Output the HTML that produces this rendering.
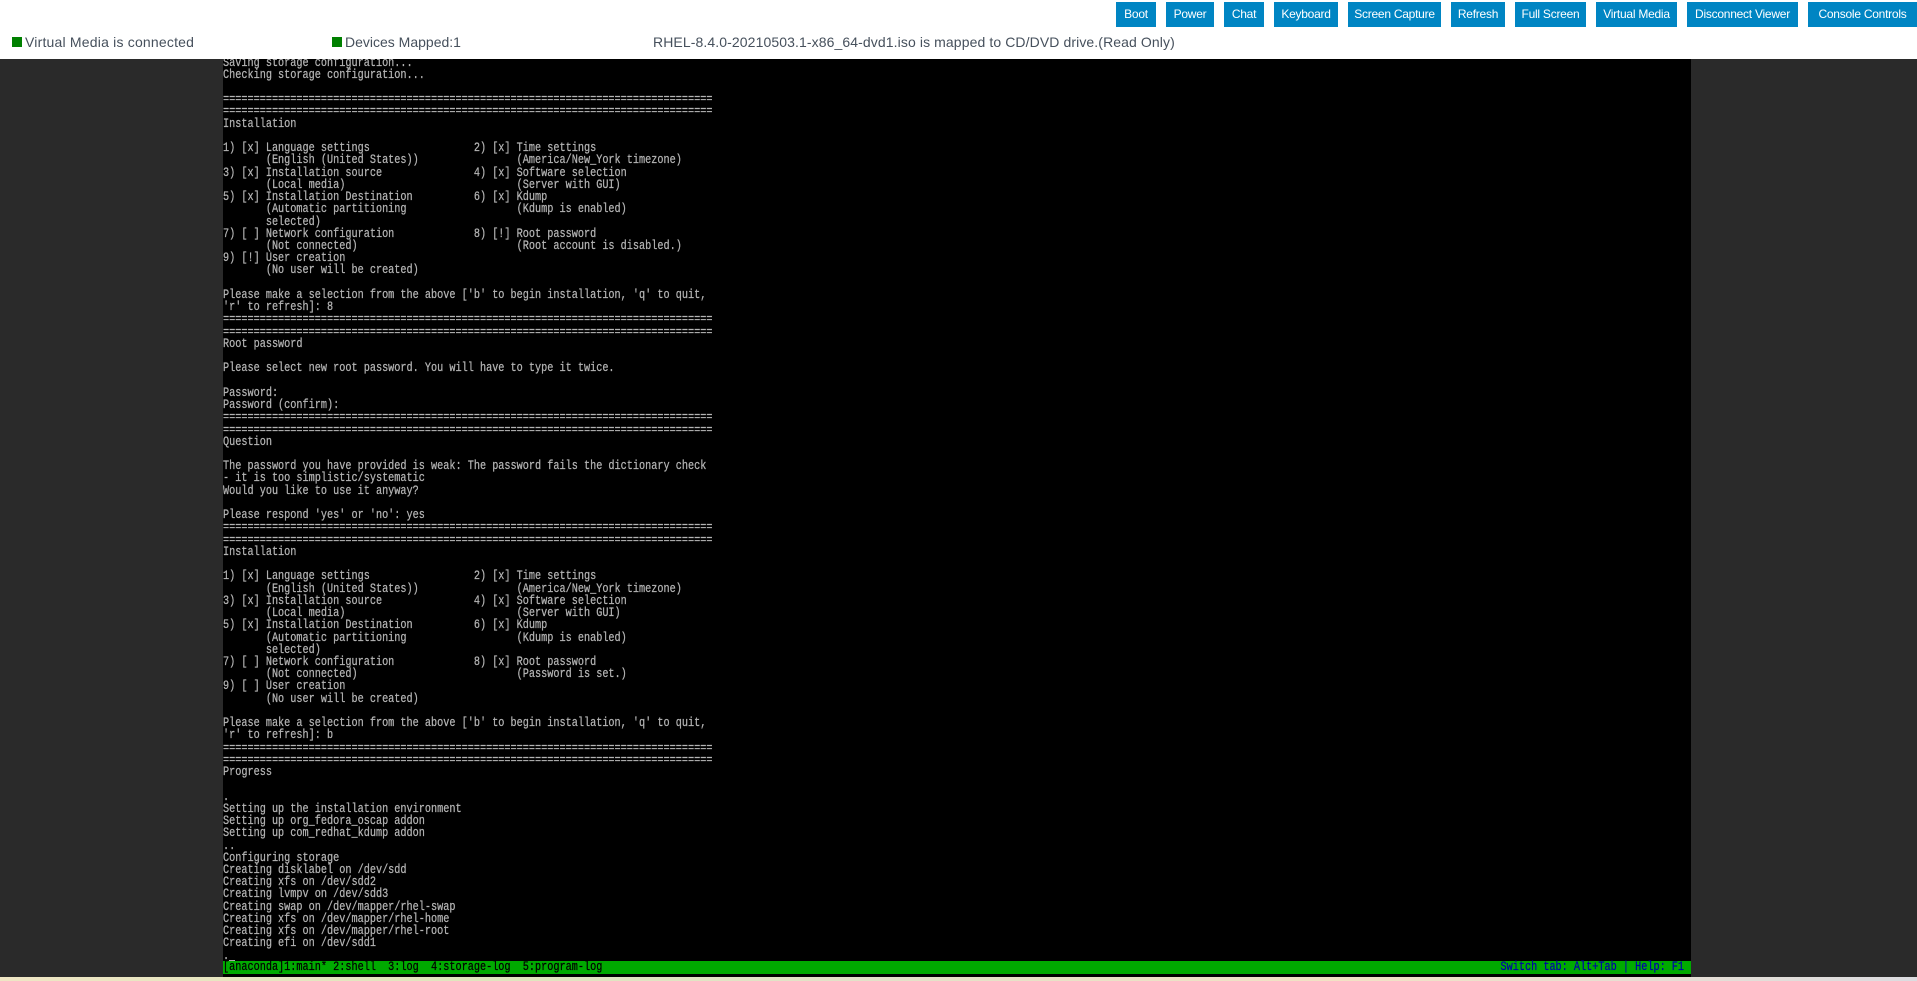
<!DOCTYPE html>
<html>
<head>
<meta charset="utf-8">
<style>
html,body{margin:0;padding:0;width:1917px;height:981px;overflow:hidden;background:#2a2a2a}
#strip{position:absolute;left:0;top:977px;width:1917px;height:4px;background:linear-gradient(90deg,#efe6c4 0%,#dfe6bd 25%,#e2e2c8 45%,#f2e2c4 70%,#dcdce0 100%)}
#console{position:absolute;left:223px;top:50px;width:1468px;height:927px;background:#000;overflow:hidden}
#text{position:absolute;left:0;top:6.5px;margin:0;width:1800px;font:12.5px/12.24px "Liberation Mono",monospace;color:#b4b4b4;-webkit-text-stroke:.25px #b4b4b4;transform:scaleX(.8156);transform-origin:0 0;filter:blur(.3px);white-space:pre}
#bar{position:absolute;left:0;top:911.3px;width:1468px;height:12.4px;background:#00aa00}
#bar pre{position:absolute;top:0;margin:0;font:12.5px/12.24px "Liberation Mono",monospace;-webkit-text-stroke:.25px currentColor;transform:scaleX(.8156);filter:blur(.25px);white-space:pre}
#bl{left:0;transform-origin:0 0!important;color:#000}
#br{right:6.5px;transform-origin:100% 0!important;color:#0000aa}
#cur{position:absolute;left:6.1px;top:909.5px;width:6.1px;height:1.8px;background:#aaa}
#head{position:absolute;left:0;top:0;width:1917px;height:59px;background:#fff;font-family:"Liberation Sans",sans-serif}
.b{position:absolute;top:2px;height:25px;line-height:24px;background:#0085c3;color:#fff;font-size:12px;letter-spacing:-.25px;text-align:center}
.s{position:absolute;top:34px;line-height:16px;font-size:14px;color:#46505c;white-space:nowrap}
.q{position:absolute;top:37px;width:10px;height:10px;background:#008000}
</style>
</head>
<body>
<div id="strip"></div>
<div id="console">
<pre id="text">Saving storage configuration...
Checking storage configuration...

================================================================================
================================================================================
Installation

1) [x] Language settings                 2) [x] Time settings
       (English (United States))                (America/New_York timezone)
3) [x] Installation source               4) [x] Software selection
       (Local media)                            (Server with GUI)
5) [x] Installation Destination          6) [x] Kdump
       (Automatic partitioning                  (Kdump is enabled)
       selected)
7) [ ] Network configuration             8) [!] Root password
       (Not connected)                          (Root account is disabled.)
9) [!] User creation
       (No user will be created)

Please make a selection from the above ['b' to begin installation, 'q' to quit,
'r' to refresh]: 8
================================================================================
================================================================================
Root password

Please select new root password. You will have to type it twice.

Password:
Password (confirm):
================================================================================
================================================================================
Question

The password you have provided is weak: The password fails the dictionary check
- it is too simplistic/systematic
Would you like to use it anyway?

Please respond 'yes' or 'no': yes
================================================================================
================================================================================
Installation

1) [x] Language settings                 2) [x] Time settings
       (English (United States))                (America/New_York timezone)
3) [x] Installation source               4) [x] Software selection
       (Local media)                            (Server with GUI)
5) [x] Installation Destination          6) [x] Kdump
       (Automatic partitioning                  (Kdump is enabled)
       selected)
7) [ ] Network configuration             8) [x] Root password
       (Not connected)                          (Password is set.)
9) [ ] User creation
       (No user will be created)

Please make a selection from the above ['b' to begin installation, 'q' to quit,
'r' to refresh]: b
================================================================================
================================================================================
Progress

.
Setting up the installation environment
Setting up org_fedora_oscap addon
Setting up com_redhat_kdump addon
..
Configuring storage
Creating disklabel on /dev/sdd
Creating xfs on /dev/sdd2
Creating lvmpv on /dev/sdd3
Creating swap on /dev/mapper/rhel-swap
Creating xfs on /dev/mapper/rhel-home
Creating xfs on /dev/mapper/rhel-root
Creating efi on /dev/sdd1
.</pre>
<div id="cur"></div>
<div id="bar"><pre id="bl">[anaconda]1:main* 2:shell  3:log  4:storage-log  5:program-log</pre><pre id="br">Switch tab: Alt+Tab | Help: F1</pre></div>
</div>
<div id="head">
<div class="b" style="left:1116px;width:40px">Boot</div>
<div class="b" style="left:1166px;width:48px">Power</div>
<div class="b" style="left:1224px;width:40px">Chat</div>
<div class="b" style="left:1274px;width:64px">Keyboard</div>
<div class="b" style="left:1348px;width:93px">Screen Capture</div>
<div class="b" style="left:1451px;width:54px">Refresh</div>
<div class="b" style="left:1515px;width:71px">Full Screen</div>
<div class="b" style="left:1596px;width:81px">Virtual Media</div>
<div class="b" style="left:1687px;width:111px">Disconnect Viewer</div>
<div class="b" style="left:1808px;width:109px">Console Controls</div>
<div class="q" style="left:12px"></div>
<div class="s" style="left:25px;letter-spacing:.2px">Virtual Media is connected</div>
<div class="q" style="left:332px"></div>
<div class="s" style="left:345px">Devices Mapped:1</div>
<div class="s" style="left:653px;letter-spacing:.1px">RHEL-8.4.0-20210503.1-x86_64-dvd1.iso is mapped to CD/DVD drive.(Read Only)</div>
</div>
</body>
</html>
